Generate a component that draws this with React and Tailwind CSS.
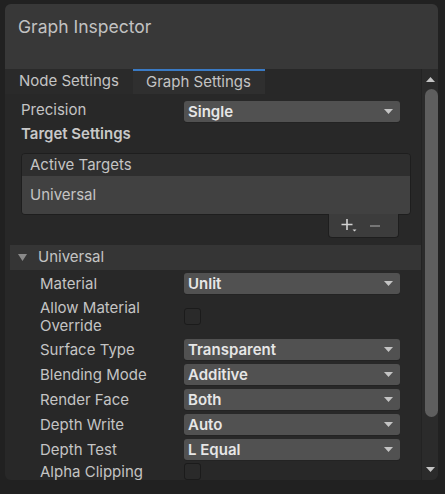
import React from "react";

const Caret = () => (
  <svg width="9" height="5" viewBox="0 0 9 5" className="shrink-0">
    <path d="M0 0h9L4.5 5z" fill="#c4c4c4" />
  </svg>
);

const Dropdown = ({ value }) => (
  <div className="flex items-center justify-between w-[216px] h-[21px] rounded-[3px] bg-[#515151] pl-[4px] pr-[7px] shadow-[0_1px_0_#232323]">
    <span className="text-[15px] font-semibold text-[#e6e6e6] leading-none">{value}</span>
    <Caret />
  </div>
);

const Checkbox = () => (
  <div className="w-[17px] h-[17px] rounded-[3px] bg-[#2a2a2a] border border-[#1b1b1b]" />
);

const Row = ({ label, children, className = "h-[25px]" }) => (
  <div className={`flex items-center pl-[35px] pr-[21px] ${className}`}>
    <div className="w-[144px] text-[15px] text-[#c4c4c4] leading-[18px]">{label}</div>
    {children}
  </div>
);

export default function App() {
  return (
    <div
      className="w-[445px] h-[494px] bg-[#212121] pt-[4px] px-[5px] overflow-hidden"
      style={{ fontFamily: "Inter, 'Noto Sans', sans-serif" }}
    >
      <div className="w-[433px] h-[476px] rounded-[6px] overflow-hidden bg-[#282828] flex flex-col">
        {/* header */}
        <div className="h-[65px] bg-[#383838] pl-[13px] pt-[11px]">
          <span className="text-[17.5px] text-[#c2c2c2] leading-none">Graph Inspector</span>
        </div>

        <div className="flex flex-1 min-h-0">
          <div className="flex-1 flex flex-col min-w-0">
            {/* tabs */}
            <div className="h-[25px] flex bg-[#282828] shrink-0">
              <div className="w-[128px] bg-[#2a2a2a] pl-[14px] flex items-center text-[15px] text-[#c4c4c4]">
                Node Settings
              </div>
              <div className="w-[132px] bg-[#2f2f2f] border-t-2 border-[#3a7ac4] pl-[13px] flex items-center text-[15px] text-[#c4c4c4]">
                Graph Settings
              </div>
            </div>

            {/* content */}
            <div className="flex-1 bg-[#282828] pt-[5px] overflow-hidden">
              <div className="flex items-center pl-[16px] h-[25px]">
                <div className="w-[163px] text-[15px] text-[#c4c4c4] -mt-[2px]">Precision</div>
                <Dropdown value="Single" />
              </div>
              <div className="h-[20px] pl-[16px] flex items-center text-[15px] font-semibold text-[#c8c8c8]">
                Target Settings
              </div>

              {/* active targets list */}
              <div className="mt-[9px] ml-[16px] mr-[10px]">
                <div className="rounded-[4px] border border-[#1e1e1e] overflow-hidden">
                  <div className="h-[23px] bg-[#2e2e2e] border-b border-[#1e1e1e] pl-[8px] flex items-center text-[15px] text-[#c4c4c4]">
                    Active Targets
                  </div>
                  <div className="h-[38px] bg-[#414141] pl-[8px] flex items-center text-[15px] text-[#c4c4c4] -mt-px">
                    Universal
                  </div>
                </div>
                <div className="flex justify-end pr-[12px]">
                  <div className="w-[71px] h-[24px] -mt-px bg-[#3c3c3c] border border-t-0 border-[#1e1e1e] rounded-b-[4px] flex items-center gap-[13px] pl-[12px]">
                    <svg width="16" height="15" viewBox="0 0 16 15">
                      <path d="M6 1v11M0.5 6.5h11" stroke="#d2d2d2" strokeWidth="1.6" />
                      <path d="M11.5 11.5h4l-2 2z" fill="#d2d2d2" />
                    </svg>
                    <svg width="10" height="4" viewBox="0 0 10 4">
                      <path d="M0 2h10" stroke="#8a8a8a" strokeWidth="1.6" />
                    </svg>
                  </div>
                </div>
              </div>

              {/* foldout */}
              <div className="mt-[7px] ml-[5px] h-[25px] bg-[#353535] flex items-center pl-[8px] gap-[11px]">
                <svg width="9" height="8" viewBox="0 0 9 8">
                  <path d="M0 0h9L4.5 7z" fill="#8a8a8a" />
                </svg>
                <span className="text-[15px] text-[#c4c4c4] -mt-px">Universal</span>
              </div>

              <div className="mt-[1px]">
                <Row label="Material"><Dropdown value="Unlit" /></Row>
                <Row label={<>Allow Material<br />Override</>} className="h-[41px] items-center">
                  <Checkbox />
                </Row>
                <Row label="Surface Type"><Dropdown value="Transparent" /></Row>
                <Row label="Blending Mode"><Dropdown value="Additive" /></Row>
                <Row label="Render Face"><Dropdown value="Both" /></Row>
                <Row label="Depth Write"><Dropdown value="Auto" /></Row>
                <Row label="Depth Test"><Dropdown value="L Equal" /></Row>
                <div className="flex items-start pl-[35px] h-[25px] pt-[1px]">
                  <div className="w-[144px] text-[15px] text-[#c4c4c4] leading-[18px]">Alpha Clipping</div>
                  <Checkbox />
                </div>
              </div>
            </div>
          </div>

          {/* scrollbar */}
          <div className="w-[17px] bg-[#2b2b2b] border-l border-[#232323] flex flex-col items-center pt-[8px] pb-[8px]">
            <svg width="9" height="5" viewBox="0 0 9 5">
              <path d="M4.5 0L9 5H0z" fill="#c4c4c4" />
            </svg>
            <div className="mt-[7px] w-[13px] h-[328px] rounded-full bg-[#5e5e5e] ml-[2px]" />
            <div className="flex-1" />
            <svg width="9" height="5" viewBox="0 0 9 5">
              <path d="M0 0h9L4.5 5z" fill="#c4c4c4" />
            </svg>
          </div>
        </div>
      </div>
    </div>
  );
}
